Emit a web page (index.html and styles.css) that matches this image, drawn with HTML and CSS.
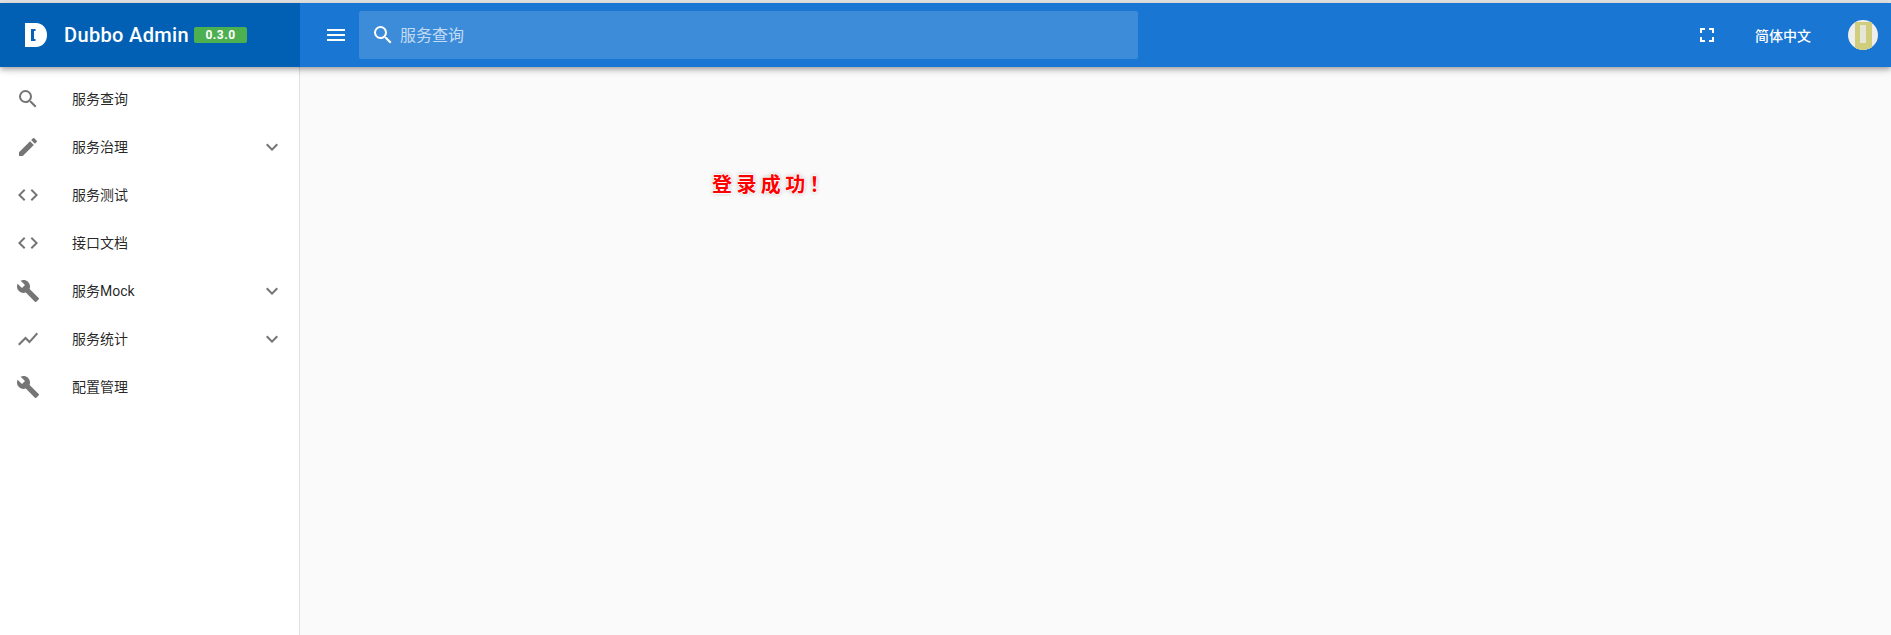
FILE: index.html
```html
<!doctype html>
<html lang="zh-cn">
<head>
    <meta charset="UTF-8">
    <title>Dubbo Admin</title>
    <link rel="stylesheet" href="styles.css">
</head>
<body>
    <div class="app">
        <header class="toolbar">
            <div class="brand">
                <svg class="logo" viewBox="0 0 22 24" width="22" height="24">
                    <path fill="#fff" d="M0 0h11c6.500 0 11 5.400 11 12s-4.500 12-11 12H0z"/>
                    <path fill="#0b61b8" d="M6 6h4.500v2H9v8h1.500v2H6z"/>
                </svg>
                <span class="brand_name">Dubbo Admin</span>
                <span class="version">0.3.0</span>
            </div>
            <div class="bar">
                <svg class="menu_icon" viewBox="0 0 24 24" width="24" height="24"><path fill="#fff" d="M3 18h18v-2H3v2zm0-5h18v-2H3v2zm0-7v2h18V6H3z"/></svg>
                <div class="search">
                    <svg viewBox="0 0 24 24" width="24" height="24"><path fill="#fff" d="M15.5 14h-.79l-.28-.27A6.47 6.47 0 0 0 16 9.5 6.5 6.5 0 1 0 9.5 16c1.61 0 3.09-.59 4.23-1.57l.27.28v.79l5 4.99L20.49 19l-4.99-5zm-6 0C7.01 14 5 11.99 5 9.5S7.01 5 9.5 5 14 7.01 14 9.5 11.99 14 9.5 14z"/></svg>
                    <span>服务查询</span>
                </div>
                <div class="bar_right">
                    <svg class="full_icon" viewBox="0 0 24 24" width="24" height="24"><path fill="#fff" d="M7 14H5v5h5v-2H7v-3zm-2-4h2V7h3V5H5v5zm12 7h-3v2h5v-5h-2v3zM14 5v2h3v3h2V5h-5z"/></svg>
                    <span class="lang">简体中文</span>
                    <span class="avatar"><i></i></span>
                </div>
            </div>
        </header>
        <div class="main">
            <nav class="side">
                <a class="item">
                    <svg viewBox="0 0 24 24" width="24" height="24"><path d="M15.5 14h-.79l-.28-.27A6.47 6.47 0 0 0 16 9.5 6.5 6.5 0 1 0 9.5 16c1.61 0 3.09-.59 4.23-1.57l.27.28v.79l5 4.99L20.49 19l-4.99-5zm-6 0C7.01 14 5 11.99 5 9.5S7.01 5 9.5 5 14 7.01 14 9.5 11.99 14 9.5 14z"/></svg>
                    <span>服务查询</span>
                </a>
                <a class="item">
                    <svg viewBox="0 0 24 24" width="24" height="24"><path d="M3 17.25V21h3.75L17.81 9.94l-3.75-3.75L3 17.25zM20.71 7.04a1 1 0 0 0 0-1.41l-2.34-2.34a1 1 0 0 0-1.41 0l-1.83 1.83 3.75 3.75 1.83-1.83z"/></svg>
                    <span>服务治理</span>
                    <svg class="arrow" viewBox="0 0 24 24" width="24" height="24"><path d="M16.59 8.59L12 13.17 7.41 8.59 6 10l6 6 6-6z"/></svg>
                </a>
                <a class="item">
                    <svg viewBox="0 0 24 24" width="24" height="24"><path d="M9.4 16.6L4.8 12l4.6-4.6L8 6l-6 6 6 6 1.4-1.4zm5.2 0l4.6-4.6-4.6-4.6L16 6l6 6-6 6-1.4-1.4z"/></svg>
                    <span>服务测试</span>
                </a>
                <a class="item">
                    <svg viewBox="0 0 24 24" width="24" height="24"><path d="M9.4 16.6L4.8 12l4.6-4.6L8 6l-6 6 6 6 1.4-1.4zm5.2 0l4.6-4.6-4.6-4.6L16 6l6 6-6 6-1.4-1.4z"/></svg>
                    <span>接口文档</span>
                </a>
                <a class="item">
                    <svg viewBox="0 0 24 24" width="24" height="24"><path d="M22.7 19l-9.1-9.1c.9-2.3.4-5-1.5-6.9-2-2-5-2.4-7.4-1.3L9 6 6 9 1.600 4.700C.4 7.100.9 10.100 2.900 12.100c1.900 1.900 4.600 2.400 6.900 1.500l9.100 9.100c.4.400 1 .4 1.400 0l2.300-2.300c.5-.4.500-1.100.100-1.400z"/></svg>
                    <span>服务Mock</span>
                    <svg class="arrow" viewBox="0 0 24 24" width="24" height="24"><path d="M16.59 8.59L12 13.17 7.41 8.59 6 10l6 6 6-6z"/></svg>
                </a>
                <a class="item">
                    <svg viewBox="0 0 24 24" width="24" height="24"><path d="M3.500 18.490l6-6.010 4 4L22 6.920l-1.410-1.410-7.090 7.970-4-4L2 16.990z"/></svg>
                    <span>服务统计</span>
                    <svg class="arrow" viewBox="0 0 24 24" width="24" height="24"><path d="M16.59 8.59L12 13.17 7.41 8.59 6 10l6 6 6-6z"/></svg>
                </a>
                <a class="item">
                    <svg viewBox="0 0 24 24" width="24" height="24"><path d="M22.7 19l-9.1-9.1c.9-2.3.4-5-1.5-6.9-2-2-5-2.4-7.4-1.3L9 6 6 9 1.600 4.700C.4 7.100.9 10.100 2.900 12.100c1.900 1.900 4.600 2.400 6.900 1.500l9.100 9.100c.4.400 1 .4 1.400 0l2.300-2.300c.5-.4.500-1.100.100-1.400z"/></svg>
                    <span>配置管理</span>
                </a>
            </nav>
            <section class="content">
                <div class="success">登录成功！</div>
            </section>
        </div>
    </div>
</body>
</html>
```

FILE: styles.css
```css
*{
    padding:0;
    margin:0;
    box-sizing: border-box;
}
html,body{
    height: 100%;
}
body{
    font-family: Roboto, "Noto Sans CJK SC", sans-serif;
    background: #fafafa;
    overflow: hidden;
}
.app{
    height: 100%;
    display: flex;
    flex-direction: column;
    border-top: 3px solid #e4e4e4;
}
.toolbar{
    height: 64px;
    flex: none;
    display: flex;
    background: #1976d2;
    box-shadow: 0 2px 4px -1px rgba(0,0,0,.2), 0 4px 5px 0 rgba(0,0,0,.14), 0 1px 10px 0 rgba(0,0,0,.12);
    position: relative;
    z-index: 2;
}
.brand{
    width: 300px;
    flex: none;
    display: flex;
    align-items: center;
    padding-left: 25px;
    background: #0260b4;
}
.brand_name{
    margin-left: 17px;
    font-size: 20px;
    font-weight: 500;
    letter-spacing: .35px;
    color: #fff;
}
.version{
    margin-left: 5px;
    width: 53px;
    height: 16px;
    line-height: 16px;
    text-align: center;
    font-size: 12px;
    font-weight: 700;
    letter-spacing: .5px;
    color: #fff;
    background: #4caf50;
    border-radius: 2px;
}
.bar{
    flex: 1;
    display: flex;
    align-items: center;
    padding-left: 24px;
}
.search{
    width: 779px;
    height: 48px;
    margin-left: 11px;
    padding-left: 12px;
    display: flex;
    align-items: center;
    gap: 5px;
    background: rgba(255,255,255,.16);
    border-radius: 2px;
    font-size: 16px;
    color: rgba(255,255,255,.7);
}
.search span{
    margin-bottom: 2px;
}
.bar_right{
    margin-left: auto;
    display: flex;
    align-items: center;
    padding-right: 13px;
}
.lang{
    margin-left: 36px;
    font-size: 14px;
    font-weight: 500;
    color: #fff;
}
.avatar{
    width: 30px;
    height: 30px;
    margin-left: 37px;
    border-radius: 50%;
    background: #eee;
    overflow: hidden;
    display: flex;
    justify-content: center;
    align-items: flex-end;
}
.avatar i{
    width: 17px;
    height: 28px;
    background: #e6e6d8;
    border: solid #d0cd7c;
    border-width: 3px 6px 7px 5px;
}
.main{
    flex: 1;
    display: flex;
    min-height: 0;
}
.side{
    width: 300px;
    flex: none;
    padding-top: 8px;
    background: #fff;
    border-right: 1px solid #e0e0e0;
}
.item{
    height: 48px;
    display: flex;
    align-items: center;
    padding: 0 15px 0 16px;
    font-size: 14px;
    color: rgba(0,0,0,.87);
}
.item svg{
    fill: #757575;
    flex: none;
}
.item span{
    margin: 0 0 3px 32px;
}
.item .arrow{
    margin-left: auto;
}
.content{
    flex: 1;
    padding: 102px 0 0 412px;
}
.success{
    font-family: "Liberation Serif", "Noto Sans CJK SC", serif;
    font-size: 20px;
    font-weight: 700;
    letter-spacing: 4.4px;
    color: #f00;
    text-shadow: 1px 0 1px #fff, -1px 0 1px #fff, 0 1px 1px #fff, 0 -1px 1px #fff, 0 0 4px #999;
}
```
